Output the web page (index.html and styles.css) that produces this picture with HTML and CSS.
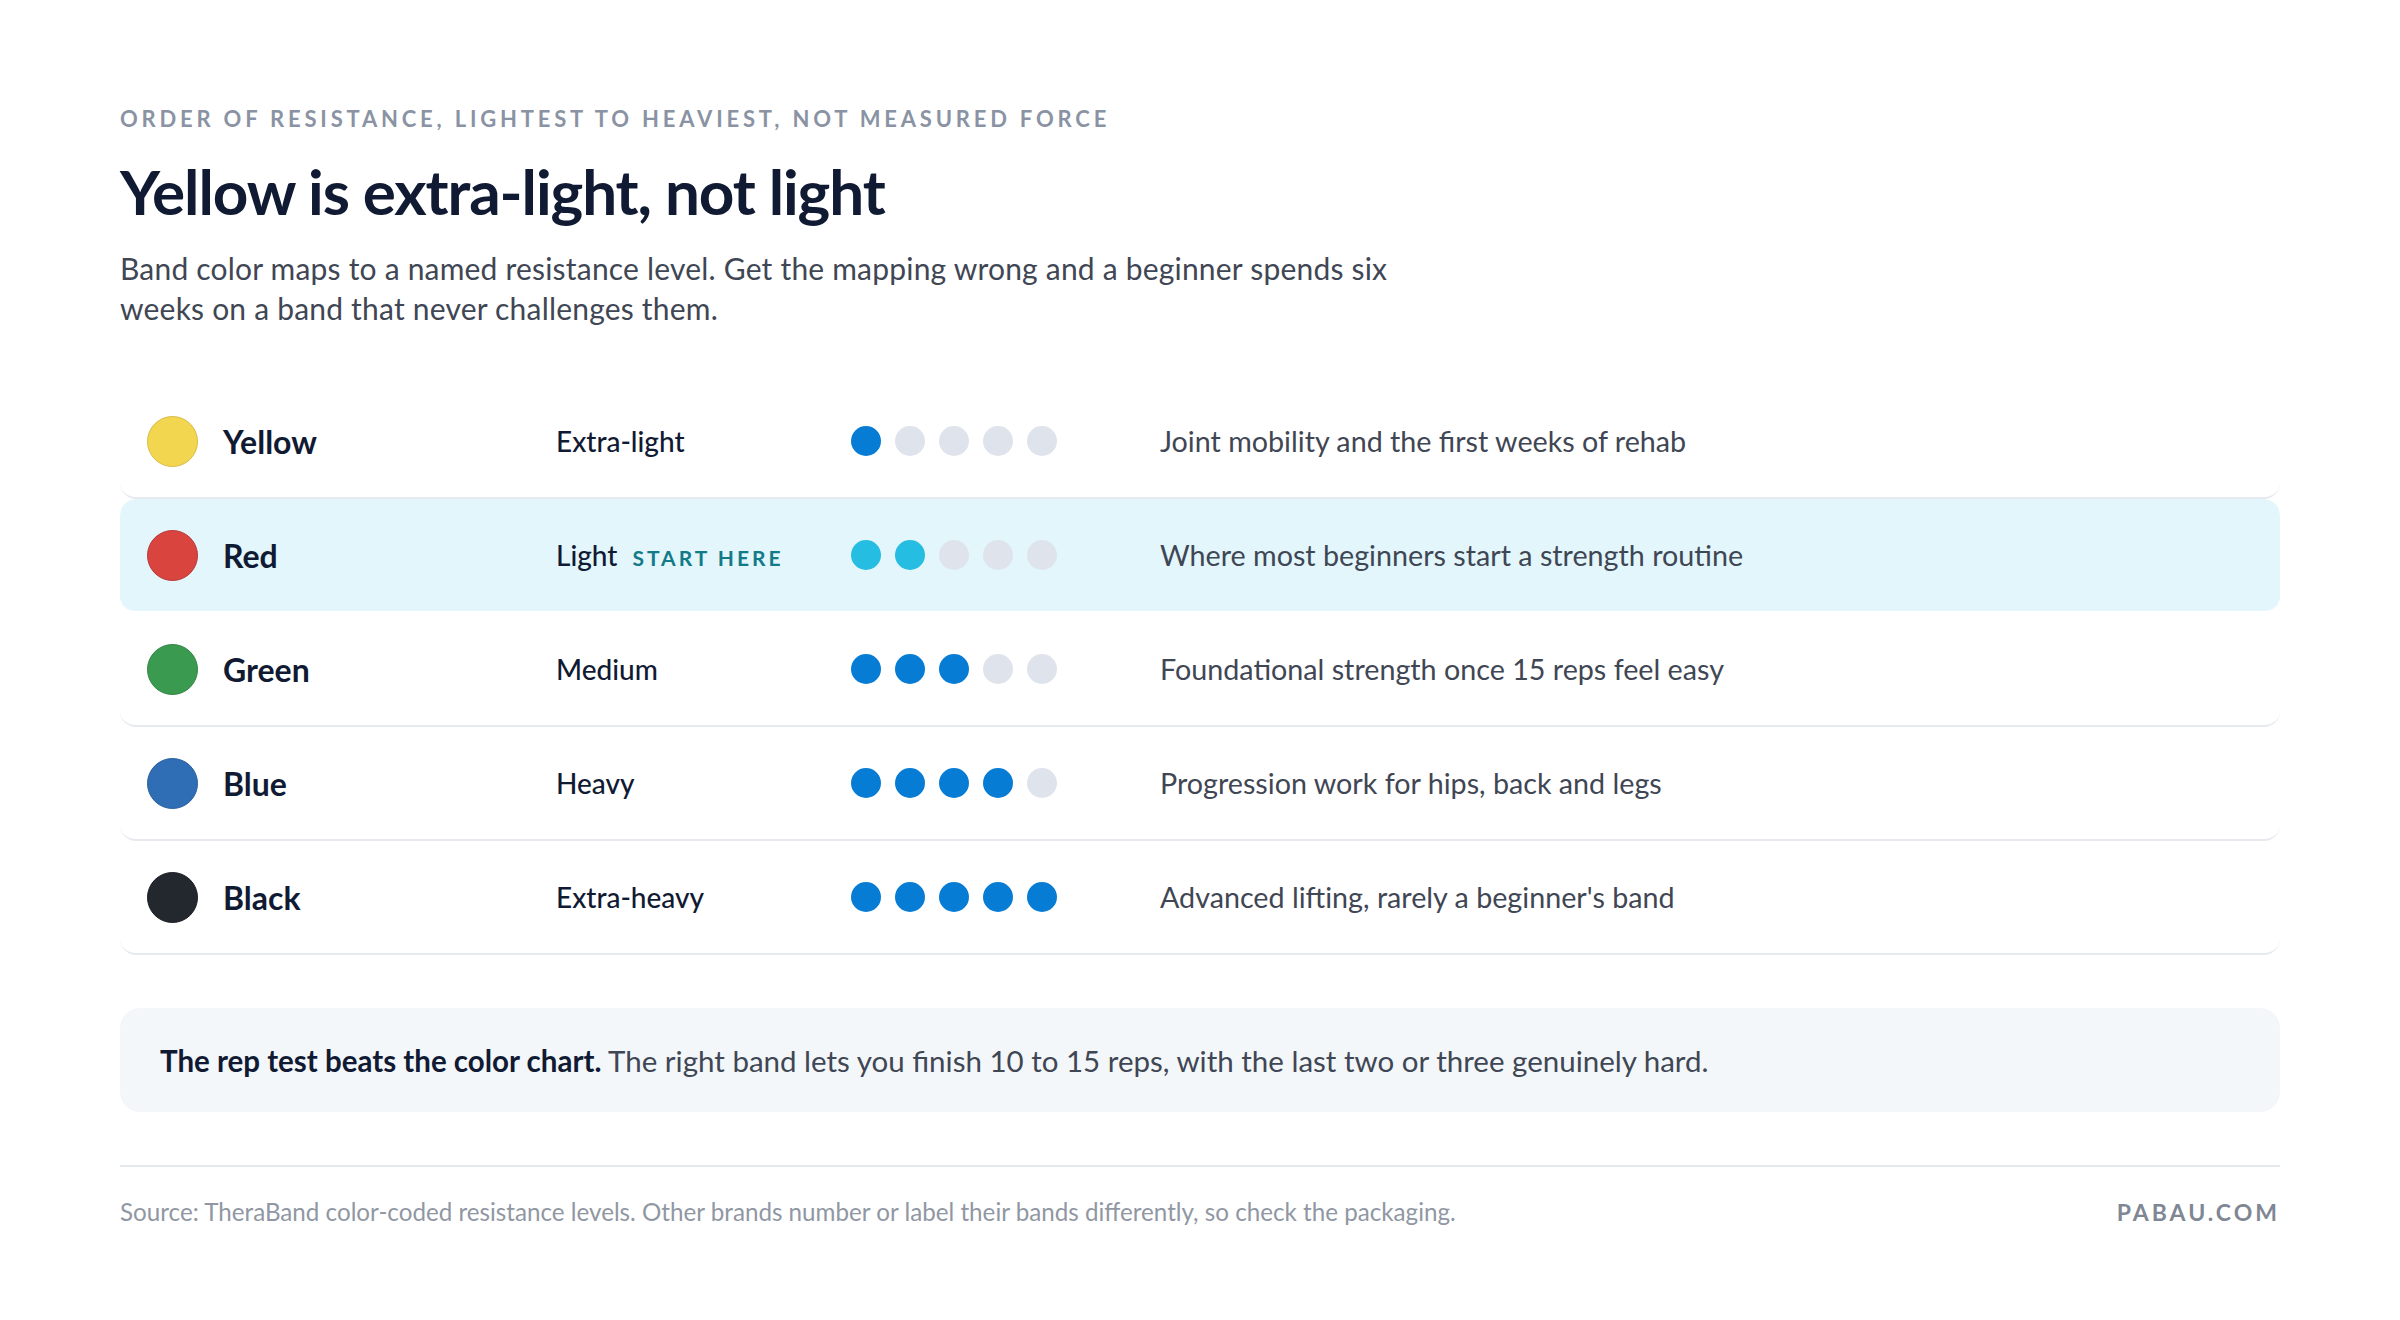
FILE: index.html
```html
<!DOCTYPE html>
<html lang="en">
<head>
<meta charset="utf-8">
<title>Resistance band colors</title>
<link rel="stylesheet" href="styles.css">
</head>
<body>
<main class="page">
  <p class="eyebrow">Order of resistance, lightest to heaviest, not measured force</p>
  <h1 class="title">Yellow is extra-light, not light</h1>
  <p class="lede">Band color maps to a named resistance level. Get the mapping wrong and a beginner spends six weeks on a band that never challenges them.</p>

  <section class="table">
    <div class="row">
      <span class="swatch swatch-yellow"></span>
      <span class="name">Yellow</span>
      <span class="level">Extra-light</span>
      <span class="dots"><i class="dot on"></i><i class="dot"></i><i class="dot"></i><i class="dot"></i><i class="dot"></i></span>
      <span class="desc">Joint mobility and the first weeks of rehab</span>
    </div>
    <div class="row row-hl">
      <span class="swatch swatch-red"></span>
      <span class="name">Red</span>
      <span class="level">Light <b class="tag">START HERE</b></span>
      <span class="dots"><i class="dot on-hl"></i><i class="dot on-hl"></i><i class="dot"></i><i class="dot"></i><i class="dot"></i></span>
      <span class="desc">Where most beginners start a strength routine</span>
    </div>
    <div class="row">
      <span class="swatch swatch-green"></span>
      <span class="name">Green</span>
      <span class="level">Medium</span>
      <span class="dots"><i class="dot on"></i><i class="dot on"></i><i class="dot on"></i><i class="dot"></i><i class="dot"></i></span>
      <span class="desc">Foundational strength once 15 reps feel easy</span>
    </div>
    <div class="row">
      <span class="swatch swatch-blue"></span>
      <span class="name">Blue</span>
      <span class="level">Heavy</span>
      <span class="dots"><i class="dot on"></i><i class="dot on"></i><i class="dot on"></i><i class="dot on"></i><i class="dot"></i></span>
      <span class="desc">Progression work for hips, back and legs</span>
    </div>
    <div class="row">
      <span class="swatch swatch-black"></span>
      <span class="name">Black</span>
      <span class="level">Extra-heavy</span>
      <span class="dots"><i class="dot on"></i><i class="dot on"></i><i class="dot on"></i><i class="dot on"></i><i class="dot on"></i></span>
      <span class="desc">Advanced lifting, rarely a beginner's band</span>
    </div>
  </section>

  <aside class="callout"><strong>The rep test beats the color chart.</strong> The right band lets you finish 10 to 15 reps, with the last two or three genuinely hard.</aside>

  <footer class="footer">
    <span class="source">Source: TheraBand color-coded resistance levels. Other brands number or label their bands differently, so check the packaging.</span>
    <span class="brand">PABAU.COM</span>
  </footer>
</main>
</body>
</html>
```

FILE: styles.css
```css
* { box-sizing: border-box; }
html, body { margin: 0; padding: 0; background: #ffffff; }
body {
  font-family: "Lato", "Inter", "Liberation Sans", sans-serif;
  color: #111a33;
}
.page {
  width: 2400px;
  padding: 108px 120px 0;
}
.eyebrow {
  margin: 0;
  font-size: 22px;
  line-height: 22px;
  font-weight: 700;
  letter-spacing: 3.8px;
  text-transform: uppercase;
  color: #8a93a3;
}
.title {
  margin: 25px 0 0;
  font-size: 62px;
  line-height: 72px;
  font-weight: 700;
  letter-spacing: -1.1px;
  color: #111a33;
}
.lede {
  margin: 21px 0 0;
  width: 1290px;
  font-size: 30px;
  line-height: 40px;
  font-weight: 400;
  letter-spacing: 0.2px;
  color: #3f4654;
}
.table {
  margin-top: 57px;
  display: flex;
  flex-direction: column;
}
.row {
  display: grid;
  grid-template-columns: 51px 358px 295px 309px 1fr;
  align-items: center;
  height: 114px;
  padding-left: 27px;
  border-bottom: 2px solid #e6e9ee;
  border-radius: 16px;
}
.row-hl {
  background: #e2f6fc;
  border-bottom-color: transparent;
  background-clip: padding-box;
}
.swatch {
  width: 51px;
  height: 51px;
  border-radius: 50%;
  border: 1.5px solid rgba(0,0,0,0.14);
}
.swatch-yellow { background: #f3d64f; border-color: #d8bb45; }
.swatch-red { background: #d9443f; border-color: #b9393a; }
.swatch-green { background: #3a9b50; border-color: #328544; }
.swatch-blue { background: #2f6db4; border-color: #2a5f9c; }
.swatch-black { background: #23272e; border-color: #1b1e23; }
.name {
  padding-left: 25px;
  font-size: 32px;
  font-weight: 700;
  color: #111a33;
}
.level {
  font-size: 28px;
  font-weight: 500;
  color: #111a33;
  display: flex;
  align-items: baseline;
  gap: 15px;
}
.tag {
  font-size: 21px;
  font-weight: 700;
  letter-spacing: 3px;
  color: #137b88;
}
.dots {
  display: flex;
  gap: 14px;
}
.dot {
  display: block;
  width: 30px;
  height: 30px;
  border-radius: 50%;
  background: #dfe3eb;
}
.dot.on { background: #077cd4; }
.dot.on-hl { background: #25bde2; }
.desc {
  font-size: 28.7px;
  font-weight: 400;
  color: #3f4654;
}
.callout {
  margin-top: 53px;
  height: 104px;
  display: flex;
  align-items: center;
  padding: 0 40px;
  background: #f3f7fa;
  border-radius: 20px;
  font-size: 29.5px;
  color: #3f4654;
  white-space: pre;
}
.callout strong { color: #111a33; font-weight: 700; }
.footer {
  margin-top: 53px;
  border-top: 2px solid #e3e9ed;
  padding-top: 30px;
  display: flex;
  justify-content: space-between;
  align-items: center;
}
.source {
  font-size: 24.2px;
  line-height: 30px;
  color: #9097a3;
}
.brand {
  font-size: 23px;
  line-height: 30px;
  font-weight: 700;
  letter-spacing: 3px;
  color: #7f8794;
}
```
